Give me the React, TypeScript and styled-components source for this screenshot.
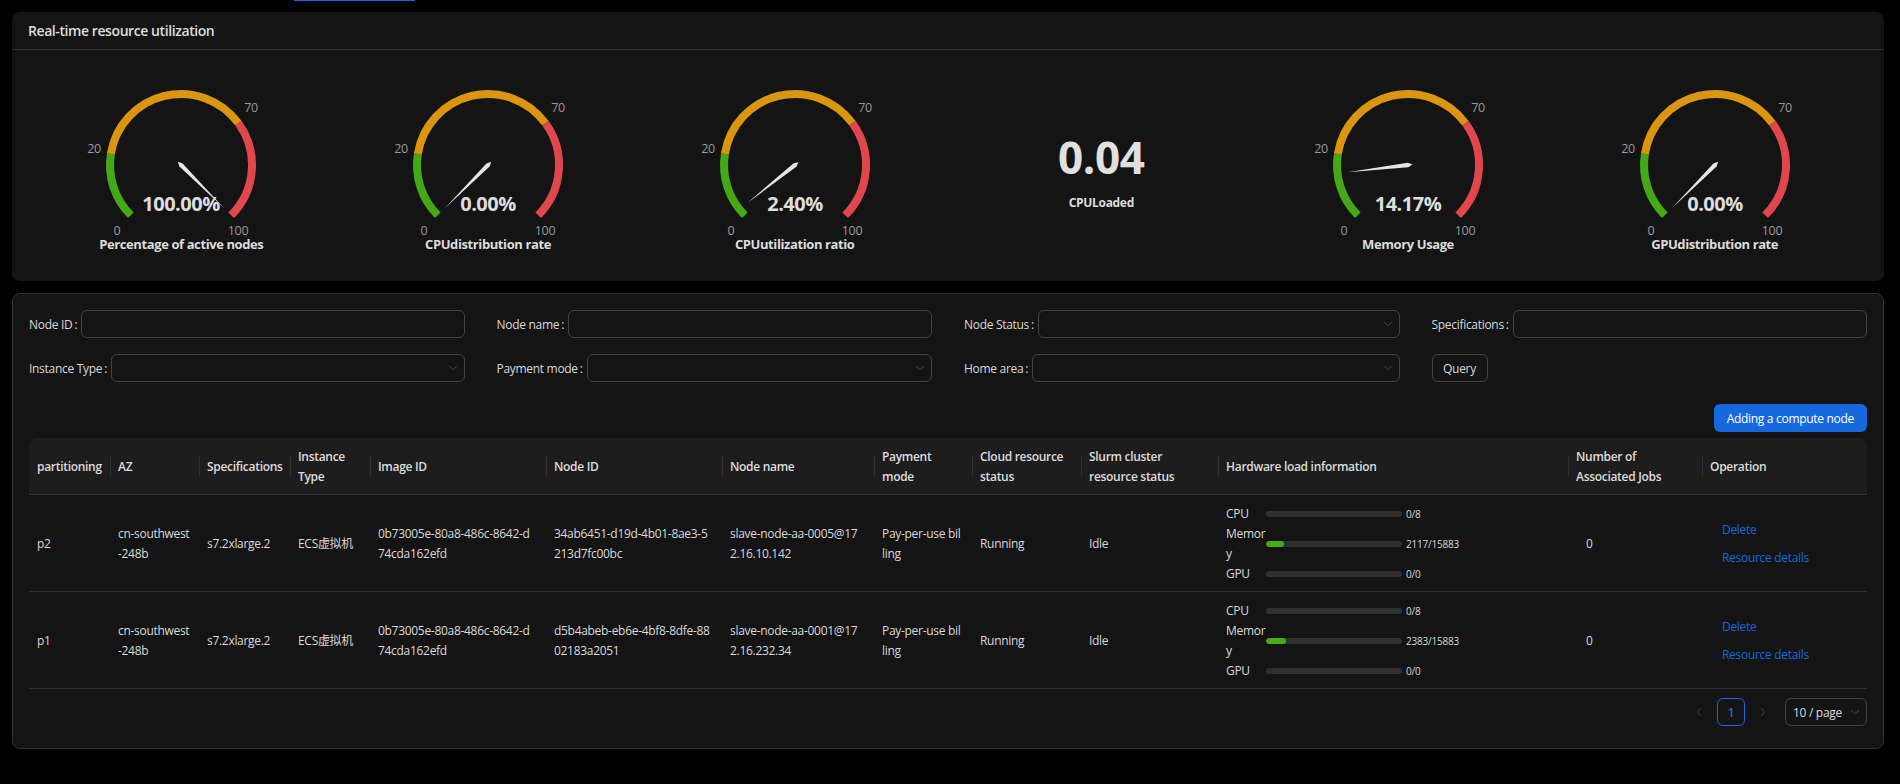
import { ChevronDown, ChevronLeft, ChevronRight } from "lucide-react";
import styled, { createGlobalStyle } from "styled-components";

const GlobalStyle = createGlobalStyle`
    html, body {
        margin: 0;
        background: #000000;
    }
    body {
        font-family: "Open Sans", "Noto Sans CJK SC", sans-serif;
        font-size: 12px;
        letter-spacing: -0.3px;
        color: #d9d9d9;
    }
`

const Page = styled("div")`
    width: 1900px;
    height: 784px;
    box-sizing: border-box;
    padding-right: 16px;
    padding-left: 12px;
    overflow: hidden;
`

const TabStrip = styled("div")`
    height: 12px;
`

const TabInk = styled("div")`
    width: 121px;
    height: 1px;
    margin-left: 282px;
    background: #1668dc;
`

const Card = styled("section")`
    background: #141414;
    border-radius: 8px;
`

const CardHeader = styled("h2")`
    margin: 0;
    height: 37px;
    padding: 0 16px;
    border-bottom: 1px solid #303030;
    font-size: 14px;
    line-height: 38px;
    font-weight: 600;
    letter-spacing: -0.42px;
    color: #dcdcdc;
`

const GaugeGrid = styled("div")`
    display: grid;
    grid-template-columns: repeat(6, 1fr);
    padding: 16px 16px 28px;
`

const GaugeBox = styled("div")`
    display: flex;
    flex-direction: column;
    align-items: center;
`

const GaugeSvg = styled("svg")`
    display: block;
    width: 306px;
    height: 182px;
    margin-bottom: -13px;
`

const AxisText = styled("text")`
    font-size: 12.5px;
    fill: #9a9a9a;
    text-anchor: middle;
    dominant-baseline: central;
`

const ValueText = styled("text")`
    font-size: 20px;
    font-weight: 700;
    letter-spacing: -0.5px;
    fill: #dedede;
    text-anchor: middle;
    dominant-baseline: central;
`

const GaugeTitle = styled("div")`
    position: relative;
    font-size: 13px;
    line-height: 18px;
    font-weight: 700;
    letter-spacing: -0.4px;
    color: #dcdcdc;
`

const StatBox = styled("div")`
    display: flex;
    flex-direction: column;
    align-items: center;
    padding-top: 63px;
`

const StatValue = styled("div")`
    font-size: 44px;
    line-height: 56px;
    font-weight: 700;
    color: #e0e0e0;
    margin-bottom: 9px;
`

const StatTitle = styled("div")`
    font-size: 12px;
    line-height: 18px;
    font-weight: 700;
    color: #dcdcdc;
`

const TableCard = styled(Card)`
    margin-top: 12px;
    border: 1px solid #303030;
    padding: 16px 16px 24px;
    height: 456px;
    box-sizing: border-box;
`

const FilterGrid = styled("div")`
    display: grid;
    grid-template-columns: repeat(4, 1fr);
    column-gap: 32px;
    row-gap: 16px;
`

const Field = styled("label")`
    display: flex;
    align-items: center;
    height: 28px;
`

const FieldName = styled("span")`
    white-space: nowrap;
    margin-right: 4px;
    &::after {
        content: ":";
        margin-left: 2px;
    }
`

const TextInput = styled("input")`
    flex: 1;
    min-width: 0;
    height: 28px;
    box-sizing: border-box;
    background: transparent;
    border: 1px solid #424242;
    border-radius: 6px;
    outline: none;
`

const SelectBox = styled("div")<{ $width?: string }>`
    flex: ${(p) => (p.$width ? "none" : "1")};
    width: ${(p) => p.$width || "auto"};
    height: 28px;
    box-sizing: border-box;
    display: flex;
    align-items: center;
    justify-content: flex-end;
    padding: 0 4px 0 7px;
    border: 1px solid #424242;
    border-radius: 6px;
    color: #626262;
`

const SelectText = styled("span")`
    flex: 1;
    white-space: nowrap;
    color: #d9d9d9;
`

const QueryButton = styled("button")`
    width: 56px;
    height: 28px;
    padding: 0;
    background: transparent;
    border: 1px solid #424242;
    border-radius: 6px;
    font: inherit;
    letter-spacing: inherit;
    color: #d9d9d9;
`

const Actions = styled("div")`
    display: flex;
    justify-content: flex-end;
    margin-top: 22px;
    margin-bottom: 6px;
`

const PrimaryButton = styled("button")`
    height: 28px;
    padding: 0 13px;
    background: #1668dc;
    border: 0;
    border-radius: 6px;
    font: inherit;
    letter-spacing: inherit;
    color: #ffffff;
`

const Table = styled("table")`
    width: 100%;
    table-layout: fixed;
    border-collapse: separate;
    border-spacing: 0;
`

const Col = styled("col")<{ $w: number }>`
    width: ${(p) => p.$w}px;
`

const Th = styled("th")`
    position: relative;
    padding: 9px 8px 7px;
    background: #1d1d1d;
    border-bottom: 1px solid #303030;
    text-align: left;
    font-weight: 600;
    line-height: 20px;
    color: #dcdcdc;

    &:first-child {
        border-top-left-radius: 8px;
    }
    &:last-child {
        border-top-right-radius: 8px;
    }
    &:not(:first-child)::before {
        content: "";
        position: absolute;
        left: 0;
        top: 18px;
        width: 1px;
        height: 20px;
        background: #303030;
    }
`

const Td = styled("td")`
    padding: 9px 8px 7px;
    border-bottom: 1px solid #303030;
    line-height: 20px;
    white-space: pre-line;
    vertical-align: middle;
`

const JobCount = styled("span")`
    padding-left: 10px;
`

const LoadRow = styled("div")`
    display: flex;
    align-items: center;
`

const LoadName = styled("span")`
    width: 40px;
    flex: none;
`

const Track = styled("div")`
    width: 136px;
    height: 6px;
    flex: none;
    margin-right: 4px;
    border-radius: 3px;
    background: #303030;
    overflow: hidden;
`

const Fill = styled("div")`
    height: 100%;
    border-radius: 3px;
    background: #49aa19;
`

const LoadValue = styled("span")`
    font-size: 10px;
    letter-spacing: -0.2px;
`

const OpLink = styled("a")`
    display: block;
    padding-left: 12px;
    line-height: 28px;
    color: #1668dc;
    cursor: pointer;
`

const Pager = styled("div")`
    display: flex;
    align-items: center;
    justify-content: flex-end;
    margin-top: 9px;
`

const PageArrow = styled("span")`
    width: 28px;
    height: 28px;
    display: flex;
    align-items: center;
    justify-content: center;
    margin: 0 4px;
    color: #4a4a4a;
`

const PageNumber = styled("span")`
    width: 28px;
    height: 28px;
    box-sizing: border-box;
    display: flex;
    align-items: center;
    justify-content: center;
    border: 1px solid #1668dc;
    border-radius: 6px;
    font-weight: 600;
    color: #1668dc;
`

const PageSize = styled(SelectBox)`
    margin-left: 4px;
`

const CX = 153;
const CY = 99;
const R = 71;

const point = (f: number) => {
    const a = ((225 - 270 * f) * Math.PI) / 180;
    return `${CX + R * Math.cos(a)} ${CY - R * Math.sin(a)}`;
};

const arc = (from: number, to: number) =>
    `M ${point(from)} A ${R} ${R} 0 0 1 ${point(to)}`;

const segments = [
    { from: 0, to: 0.2, color: "#45a817" },
    { from: 0.2, to: 0.7, color: "#da9511" },
    { from: 0.7, to: 1, color: "#e0474c" },
];

const Gauge = ({ value, title }: { value: number; title: string }) => (
    <GaugeBox>
        <GaugeSvg viewBox="0 0 306 182">
            {segments.map((s) => (
                <path key={s.color} d={arc(s.from, s.to)} fill="none" stroke={s.color} strokeWidth="8" />
            ))}
            <AxisText x={CX - 64} y={CY + 65}>0</AxisText>
            <AxisText x={CX - 87} y={CY - 17}>20</AxisText>
            <AxisText x={CX + 70} y={CY - 58}>70</AxisText>
            <AxisText x={CX + 57} y={CY + 65}>100</AxisText>
            <polygon
                points="61,0 0,2.2 -4.5,0 0,-2.2"
                fill="#e6e6e6"
                transform={`translate(${CX} ${CY}) rotate(${-(225 - 2.7 * value)})`}
            />
            <ValueText x={CX} y={CY + 38}>{value.toFixed(2)}%</ValueText>
        </GaugeSvg>
        <GaugeTitle>{title}</GaugeTitle>
    </GaugeBox>
);

const Load = ({ name, used, total }: { name: string; used: number; total: number }) => (
    <LoadRow>
        <LoadName>{name}</LoadName>
        <Track>
            <Fill style={{ width: `${total ? (used / total) * 100 : 0}%` }} />
        </Track>
        <LoadValue>{used}/{total}</LoadValue>
    </LoadRow>
);

const columns = [
    { w: 81, title: "partitioning" },
    { w: 89, title: "AZ" },
    { w: 91, title: "Specifications" },
    { w: 80, title: "Instance Type" },
    { w: 176, title: "Image ID" },
    { w: 176, title: "Node ID" },
    { w: 152, title: "Node name" },
    { w: 98, title: "Payment mode" },
    { w: 109, title: "Cloud resource status" },
    { w: 137, title: "Slurm cluster resource status" },
    { w: 350, title: "Hardware load information" },
    { w: 134, title: "Number of Associated Jobs" },
    { w: 165, title: "Operation" },
];

const nodes = [
    {
        part: "p2",
        id: "34ab6451-d19d-4b01-8ae3-5\n213d7fc00bc",
        name: "slave-node-aa-0005@17\n2.16.10.142",
        mem: 2117,
    },
    {
        part: "p1",
        id: "d5b4abeb-eb6e-4bf8-8dfe-88\n02183a2051",
        name: "slave-node-aa-0001@17\n2.16.232.34",
        mem: 2383,
    },
];

const App = () => {
    return (
        <Page>
            <GlobalStyle />
            <TabStrip>
                <TabInk />
            </TabStrip>
            <Card>
                <CardHeader>Real-time resource utilization</CardHeader>
                <GaugeGrid>
                    <Gauge value={100} title="Percentage of active nodes" />
                    <Gauge value={0} title="CPUdistribution rate" />
                    <Gauge value={2.4} title="CPUutilization ratio" />
                    <StatBox>
                        <StatValue>0.04</StatValue>
                        <StatTitle>CPULoaded</StatTitle>
                    </StatBox>
                    <Gauge value={14.17} title="Memory Usage" />
                    <Gauge value={0} title="GPUdistribution rate" />
                </GaugeGrid>
            </Card>
            <TableCard>
                <FilterGrid>
                    <Field><FieldName>Node ID</FieldName><TextInput /></Field>
                    <Field><FieldName>Node name</FieldName><TextInput /></Field>
                    <Field><FieldName>Node Status</FieldName><SelectBox><ChevronDown size={14} strokeWidth={1.25} /></SelectBox></Field>
                    <Field><FieldName>Specifications</FieldName><TextInput /></Field>
                    <Field><FieldName>Instance Type</FieldName><SelectBox><ChevronDown size={14} strokeWidth={1.25} /></SelectBox></Field>
                    <Field><FieldName>Payment mode</FieldName><SelectBox><ChevronDown size={14} strokeWidth={1.25} /></SelectBox></Field>
                    <Field><FieldName>Home area</FieldName><SelectBox><ChevronDown size={14} strokeWidth={1.25} /></SelectBox></Field>
                    <Field><QueryButton>Query</QueryButton></Field>
                </FilterGrid>
                <Actions>
                    <PrimaryButton>Adding a compute node</PrimaryButton>
                </Actions>
                <Table>
                    <colgroup>
                        {columns.map((c) => (
                            <Col key={c.title} $w={c.w} />
                        ))}
                    </colgroup>
                    <thead>
                        <tr>
                            {columns.map((c) => (
                                <Th key={c.title}>{c.title}</Th>
                            ))}
                        </tr>
                    </thead>
                    <tbody>
                        {nodes.map((n) => (
                            <tr key={n.part}>
                                <Td>{n.part}</Td>
                                <Td>{"cn-southwest\n-248b"}</Td>
                                <Td>s7.2xlarge.2</Td>
                                <Td>ECS虚拟机</Td>
                                <Td>{"0b73005e-80a8-486c-8642-d\n74cda162efd"}</Td>
                                <Td>{n.id}</Td>
                                <Td>{n.name}</Td>
                                <Td>{"Pay-per-use bil\nling"}</Td>
                                <Td>Running</Td>
                                <Td>Idle</Td>
                                <Td>
                                    <Load name="CPU" used={0} total={8} />
                                    <Load name={"Memor\ny"} used={n.mem} total={15883} />
                                    <Load name="GPU" used={0} total={0} />
                                </Td>
                                <Td><JobCount>0</JobCount></Td>
                                <Td>
                                    <OpLink>Delete</OpLink>
                                    <OpLink>Resource details</OpLink>
                                </Td>
                            </tr>
                        ))}
                    </tbody>
                </Table>
                <Pager>
                    <PageArrow><ChevronLeft size={14} strokeWidth={1.5} /></PageArrow>
                    <PageNumber>1</PageNumber>
                    <PageArrow><ChevronRight size={14} strokeWidth={1.5} /></PageArrow>
                    <PageSize $width="82px">
                        <SelectText>10 / page</SelectText>
                        <ChevronDown size={14} strokeWidth={1.25} />
                    </PageSize>
                </Pager>
            </TableCard>
        </Page>
    );
};

export default App;
